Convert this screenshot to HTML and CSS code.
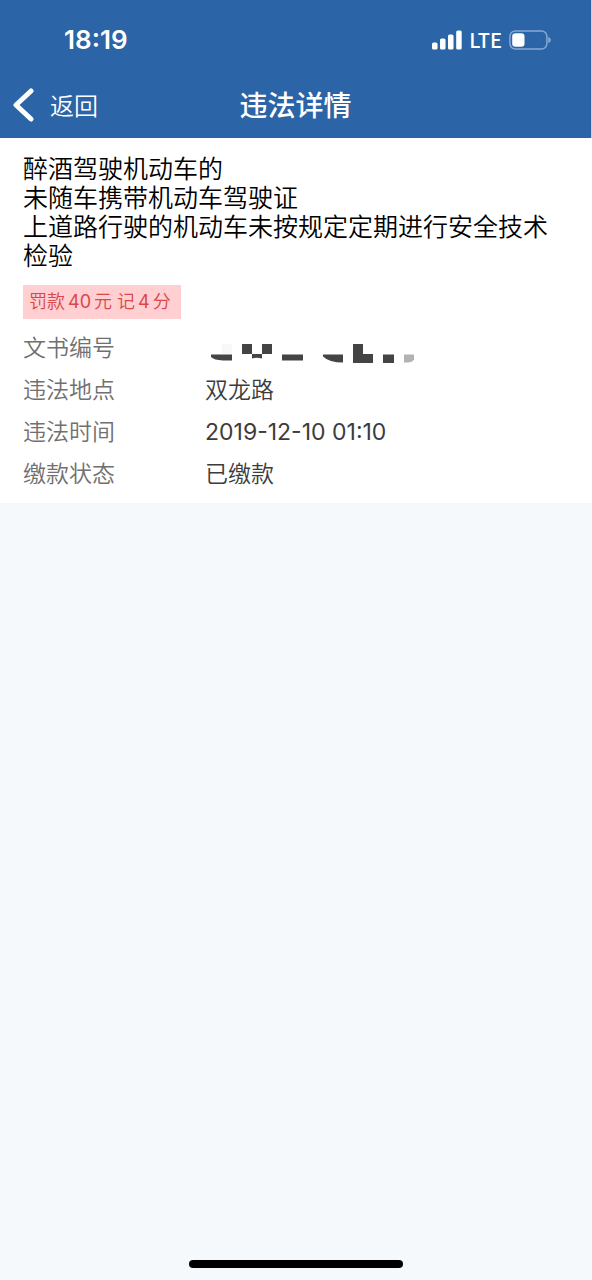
FILE: index.html
```html
<!DOCTYPE html>
<html lang="zh-CN">
<head>
<meta charset="utf-8">
<meta name="viewport" content="width=device-width, initial-scale=1">
<title>违法详情</title>
<link rel="stylesheet" href="styles.css">
</head>
<body>
<div class="screen">
  <header class="header">
    <div class="status">
      <time class="clock">18:19</time>
      <div class="status-icons">
        <svg class="signal" width="30" height="20" viewBox="0 0 30 20" aria-hidden="true">
          <rect x="0" y="12.5" width="5.5" height="7" rx="1.6"/>
          <rect x="8" y="8.5" width="5.5" height="11" rx="1.6"/>
          <rect x="16" y="4.5" width="5.5" height="15" rx="1.6"/>
          <rect x="24.2" y="0.5" width="5.5" height="19" rx="1.6"/>
        </svg>
        <span class="network">LTE</span>
        <svg class="battery" width="42" height="20" viewBox="0 0 42 20" aria-hidden="true">
          <rect class="battery-shell" x="0.9" y="0.9" width="37" height="18.2" rx="5.5"/>
          <rect x="3.2" y="3.2" width="12.3" height="13.6" rx="3.2"/>
          <path class="battery-tip" d="M39.200 7v6c1.500-.4 2.600-1.500 2.600-3s-1.100-2.600-2.600-3z"/>
        </svg>
      </div>
    </div>
    <nav class="navbar">
      <button class="back" type="button">
        <svg width="22" height="34" viewBox="0 0 22 34" aria-hidden="true"><path d="M19 3L4 17l15 14"/></svg>
        <span>返回</span>
      </button>
      <h1 class="title">违法详情</h1>
    </nav>
  </header>
  <main class="content">
    <section class="detail">
      <p class="offence">醉酒驾驶机动车的<br>未随车携带机动车驾驶证<br>上道路行驶的机动车未按规定定期进行安全技术检验</p>
      <p class="penalty">罚款<span class="num">40</span>元 记<span class="num">4</span>分</p>
      <dl class="fields">
        <dt>文书编号</dt>
        <dd>
          <svg class="masked" width="205" height="20" viewBox="0 0 205 20" role="img" aria-label="已遮挡">
            <path class="mask-pale" d="M11 0h10v10H11z"/>
            <path d="M0 10.500h21v6H12Q3 16 0 13zM31 0h10v10h10V0h10v10H51v4.500q-5-1.500-10 0V10H31zM71 10.500h21v6H71zM112 10.500h20v8q-14 0-20-6zM142 0h10v10h10v9h-20zM172 10.500h11v8.500h-11z"/>
            <path class="mask-grey" d="M193 10.500h10v5q-2 3-6 3h-4z"/>
          </svg>
        </dd>
        <dt>违法地点</dt>
        <dd>双龙路</dd>
        <dt>违法时间</dt>
        <dd><time class="date">2019-12-10 01:10</time></dd>
        <dt>缴款状态</dt>
        <dd>已缴款</dd>
      </dl>
    </section>
  </main>
  <footer class="home"><div class="home-bar"></div></footer>
</div>
</body>
</html>
```
FILE: styles.css
```css
* {
  box-sizing: border-box;
}

body {
  margin: 0;
  background: #f5f9fb;
  font-family: Inter, "Noto Sans CJK SC", sans-serif;
  color: #000;
}

.screen {
  min-height: 100vh;
  display: flex;
  flex-direction: column;
}

.header {
  background: #2b64a7;
  color: #fff;
  border-right: 1px solid #bcd3ec;
}

.status {
  height: 72px;
  padding: 8px 40px 0 64px;
  display: flex;
  align-items: center;
  justify-content: space-between;
}

.clock {
  font-size: 26px;
  font-weight: 600;
  line-height: 32px;
}

.status-icons {
  display: flex;
  align-items: center;
  gap: 7px;
}

.status-icons svg {
  fill: #fff;
}

.status-icons .battery-shell {
  fill: none;
  stroke: #86a8d2;
  stroke-width: 1.5;
}

.status-icons .battery-tip {
  fill: #86a8d2;
}

.network {
  font-family: "Noto Sans CJK SC", sans-serif;
  font-size: 20px;
  font-weight: 500;
  line-height: 24px;
}

.navbar {
  height: 66px;
  padding: 0 12px;
  display: grid;
  grid-template-columns: 1fr auto 1fr;
  align-items: center;
}

.back {
  display: flex;
  align-items: center;
  gap: 16px;
  padding: 0;
  border: 0;
  background: none;
  color: inherit;
  font: 350 24px/32px "Noto Sans CJK SC", sans-serif;
}

.back svg {
  fill: none;
  stroke: #fff;
  stroke-width: 5;
  stroke-linecap: round;
  stroke-linejoin: round;
}

.title {
  margin: 0;
  padding-top: 2px;
  font-size: 28px;
  font-weight: 500;
  line-height: 32px;
}

.content {
  flex: 1;
}

.detail {
  padding: 17px 23px 8px;
  background: #fff;
}

.offence {
  margin: 0 0 14px;
  font-size: 25px;
  font-weight: 350;
  line-height: 29px;
}

.penalty {
  width: fit-content;
  margin: 0 0 8px;
  padding: 0 10px 0 6px;
  background: #ffcfd1;
  color: #d9474b;
  font-size: 18px;
  font-weight: 350;
  line-height: 34px;
}

.num {
  margin: 0 3px;
  font-weight: 400;
}

.fields {
  margin: 0;
  display: grid;
  grid-template-columns: 1fr 2fr;
  font-size: 23px;
  font-weight: 350;
  line-height: 42px;
}

.fields dt {
  color: #707070;
}

.fields dd {
  margin: 0;
  color: #3c3c3c;
}

.date {
  font-weight: 400;
}

.masked {
  display: block;
  margin: 17px 0 0 6px;
  fill: #444;
}

.mask-pale {
  fill: #f8f8f8;
}

.mask-grey {
  fill: #b2b2b2;
}

.home {
  display: flex;
  justify-content: center;
  padding: 12px 0;
}

.home-bar {
  width: 36%;
  height: 8px;
  border-radius: 4px;
  background: #000;
}
```
